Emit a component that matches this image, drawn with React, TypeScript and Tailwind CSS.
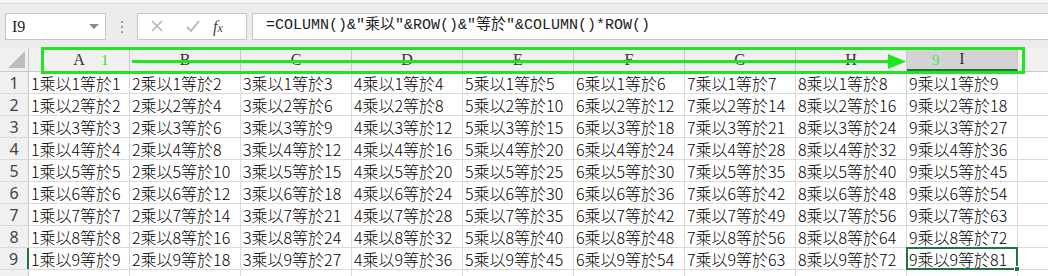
import React from 'react';

const cols = ['A', 'B', 'C', 'D', 'E', 'F', 'G', 'H', 'I'];
const rows = [1, 2, 3, 4, 5, 6, 7, 8, 9];

const colWidth = (i: number) => (i === 0 ? 'w-[101px]' : 'w-[111px]');

function TopBar() {
  return (
    <div className="h-[48px] bg-[#ececec] border-t-[3px] border-[#f6f6f6] relative">
      <div className="absolute top-0 left-0 right-0 h-px bg-[#dadada]" />
      <div className="flex items-start pt-[10px] pl-[5px]">
        <div className="w-[101px] h-[27px] bg-white border border-[#c6c6c6] flex items-center justify-between pl-[6px] pr-[6px]">
          <span className="text-[16px] text-[#222]" style={{ fontFamily: '"Liberation Serif", serif' }}>
            I9
          </span>
          <span className="w-0 h-0 border-l-[5px] border-r-[5px] border-t-[5px] border-l-transparent border-r-transparent border-t-[#8a8a8a]" />
        </div>
        <div className="w-[31px] h-[27px] flex flex-col items-center justify-center gap-[3px]">
          <span className="w-[2px] h-[2px] bg-[#a0a0a0]" />
          <span className="w-[2px] h-[2px] bg-[#a0a0a0]" />
          <span className="w-[2px] h-[2px] bg-[#a0a0a0]" />
        </div>
        <div className="w-[110px] h-[27px] bg-white border border-[#c6c6c6] flex items-center">
          <svg width="36" height="27" viewBox="0 0 36 27" className="ml-[1px]">
            <path d="M13 8 L23 18 M23 8 L13 18" stroke="#b4b4b4" strokeWidth="1.6" fill="none" />
          </svg>
          <svg width="36" height="27" viewBox="0 0 36 27">
            <path d="M12 14 L16 18 L24 8" stroke="#b4b4b4" strokeWidth="1.8" fill="none" />
          </svg>
          <span
            className="ml-[2px] text-[16px] italic text-[#444]"
            style={{ fontFamily: '"Liberation Serif", serif' }}
          >
            f<span className="text-[12px]">x</span>
          </span>
        </div>
        <div className="ml-[5px] flex-1 h-[27px] bg-white border border-[#c6c6c6] border-r-0 flex items-center pl-[13px]">
          <span
            className="text-[15px] text-[#222] whitespace-pre"
            style={{ fontFamily: '"Liberation Mono", "Noto Sans CJK TC", monospace' }}
          >
            =COLUMN()&amp;"乘以"&amp;ROW()&amp;"等於"&amp;COLUMN()*ROW()
          </span>
        </div>
      </div>
    </div>
  );
}

function HeaderRow() {
  return (
    <div className="flex h-[24px] bg-[#f0f0f0] border-b border-[#c8c8c8]">
      <div className="w-[29px] shrink-0 border-r border-[#c8c8c8] relative">
        <svg className="absolute right-[3px] bottom-[3px]" width="17" height="17" viewBox="0 0 17 17">
          <polygon points="17,0 17,17 0,17" fill="#bdbdbd" />
        </svg>
      </div>
      {cols.map((c, i) => (
        <div
          key={c}
          className={`${colWidth(i)} shrink-0 border-r border-[#c8c8c8] flex items-center justify-center text-[16px] text-[#333] ${
            c === 'I' ? 'bg-[#d3d3d3] border-b-2 border-b-[#217346]' : ''
          }`}
          style={{ fontFamily: '"Liberation Serif", serif' }}
        >
          {c}
        </div>
      ))}
      <div className="flex-1" />
    </div>
  );
}

function Grid() {
  return (
    <div>
      {rows.map((r) => (
        <div key={r} className="flex h-[22px] border-b border-[#d9d9d9]">
          <div
            className={`w-[29px] shrink-0 flex items-center justify-center text-[16px] text-[#444] bg-[#f0f0f0] border-r ${
              r === 9 ? 'bg-[#d3d3d3] border-r-2 border-r-[#217346]' : 'border-[#c8c8c8]'
            }`}
            style={{ fontFamily: '"Noto Sans", sans-serif' }}
          >
            {r}
          </div>
          {cols.map((c, i) => {
            const selected = c === 'I' && r === 9;
            return (
              <div
                key={c}
                className={`${colWidth(i)} shrink-0 border-r border-[#d9d9d9] flex items-center pl-[2px] text-[16px] leading-[22px] font-light text-black whitespace-nowrap relative`}
                style={{ fontFamily: '"Noto Sans CJK TC", sans-serif' }}
              >
                {`${i + 1}乘以${r}等於${(i + 1) * r}`}
                {selected && (
                  <>
                    <span className="absolute -left-px -top-px right-[-1px] bottom-[-1px] border-2 border-[#217346] pointer-events-none" />
                    <span className="absolute right-[-3px] bottom-[-3px] w-[6px] h-[6px] bg-[#217346] border border-white" />
                  </>
                )}
              </div>
            );
          })}
          <div className="flex-1" />
        </div>
      ))}
      <div className="flex h-[10px]">
        <div className="w-[29px] shrink-0 bg-[#f0f0f0] border-r border-[#c8c8c8]" />
        {cols.map((c, i) => (
          <div key={c} className={`${colWidth(i)} shrink-0 border-r border-[#d9d9d9]`} />
        ))}
      </div>
    </div>
  );
}

function Overlay() {
  return (
    <>
      <div className="absolute left-[41px] top-[47px] w-[984px] h-[27px] border-[3px] border-[#1fe61f] pointer-events-none" />
      <div className="absolute left-[132px] top-[60px] w-[760px] h-[3px] bg-[#1fe61f]" />
      <svg className="absolute left-[888px] top-[54px]" width="18" height="15" viewBox="0 0 18 15">
        <polygon points="0,0 18,7.5 0,15" fill="#1fe61f" />
      </svg>
      <span
        className="absolute left-[101px] top-[49px] text-[15px] leading-[22px] text-[#2ee02e]"
        style={{ fontFamily: '"Liberation Serif", serif' }}
      >
        1
      </span>
      <span
        className="absolute left-[932px] top-[49px] text-[15px] leading-[22px] text-[#4fe34f]"
        style={{ fontFamily: '"Liberation Serif", serif' }}
      >
        9
      </span>
    </>
  );
}

export default function App() {
  return (
    <div className="w-[1048px] h-[276px] overflow-hidden bg-white relative">
      <TopBar />
      <HeaderRow />
      <Grid />
      <Overlay />
    </div>
  );
}
